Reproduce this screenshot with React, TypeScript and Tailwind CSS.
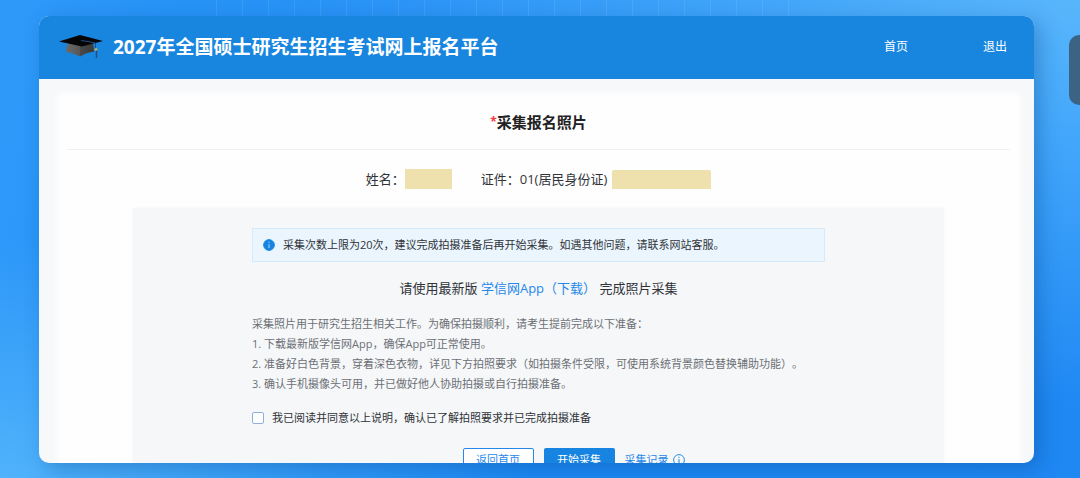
import { useState } from "react";
import type { ReactNode } from "react";

const steps = [
  "1. 下载最新版学信网App，确保App可正常使用。",
  "2. 准备好白色背景，穿着深色衣物，详见下方拍照要求（如拍摄条件受限，可使用系统背景颜色替换辅助功能）。",
  "3. 确认手机摄像头可用，并已做好他人协助拍摄或自行拍摄准备。",
];

function CapLogo() {
  return (
    <svg viewBox="0 0 46 26" className="h-[26px] w-[46px] shrink-0" aria-hidden="true">
      <defs>
        <linearGradient id="cap" x1="0" x2="1">
          <stop offset="0" stopColor="#6b6b6b" />
          <stop offset="0.5" stopColor="#575757" />
          <stop offset="1" stopColor="#3c3c3c" />
        </linearGradient>
      </defs>
      <path d="M9.5 10 L7.5 17.5 Q14 19 22 22.5 Q28 18.5 36 17.5 L35 9 Z" fill="url(#cap)" />
      <path d="M22 12 V22.5 Q28 18.5 36 17.5 L35 9 Z" fill="#333" opacity="0.35" />
      <path d="M1 7.5 L22 1 L45 7 L24 12.5 Z" fill="#050505" />
      <path d="M23 6.5 L30 7.5 L37.5 9 V15" fill="none" stroke="#1d4f86" strokeWidth="1" />
      <circle cx="38" cy="15.5" r="1.5" fill="#b9b35b" />
      <path d="M38.5 16.5 V24" stroke="#1d4f86" strokeWidth="1.5" />
    </svg>
  );
}

function InfoIcon({ filled }: { filled?: boolean }) {
  return (
    <svg viewBox="0 0 12 12" className="size-3 shrink-0" aria-hidden="true">
      <circle
        cx="6"
        cy="6"
        r="5.4"
        fill={filled ? "#1684e0" : "none"}
        stroke="#1684e0"
        strokeWidth="0.9"
      />
      <path
        d="M6 5.2 V9 M6 2.8 V3.9"
        stroke={filled ? "#a9d8fb" : "#1684e0"}
        strokeWidth="1"
      />
    </svg>
  );
}

function Header() {
  return (
    <header className="flex h-[63px] shrink-0 items-center bg-[#1886df] pr-[27px] pb-[2px] pl-[19px] text-white">
      <CapLogo />
      <h1 className="ml-[9px] text-[19px] leading-6 font-bold whitespace-nowrap">
        2027年全国硕士研究生招生考试网上报名平台
      </h1>
      <nav className="ml-auto flex gap-[75px] text-[12px] leading-4 whitespace-nowrap">
        <a href="#home">首页</a>
        <a href="#logout">退出</a>
      </nav>
    </header>
  );
}

function Field({ label, children }: { label: string; children: ReactNode }) {
  return (
    <div className="flex items-center">
      <dt>{label}</dt>
      <dd className="flex items-center">{children}</dd>
    </div>
  );
}

export default function App() {
  const [agreed, setAgreed] = useState(false);

  return (
    <div
      lang="zh-CN"
      className="relative flex h-screen flex-col overflow-hidden bg-[#2491f7] bg-[radial-gradient(ellipse_at_top_right,#58b6fb_0%,#3ea3fa_25%,transparent_60%),radial-gradient(ellipse_at_bottom_left,#50b2fb_0%,transparent_35%),linear-gradient(100deg,#2f9af9_0%,#1c8af5_35%,#1f88f3_100%)] pt-4 pr-[46px] pb-[15px] pl-[39px] font-['Open_Sans','Noto_Sans_CJK_SC',sans-serif] text-[#303338] [text-spacing-trim:space-all]"
    >
      {/* faint grid in the backdrop */}
      <div className="absolute top-0 left-[20%] h-4 w-[54%] bg-[repeating-linear-gradient(90deg,rgba(255,255,255,0.09)_0px,rgba(255,255,255,0.09)_1px,transparent_1px,transparent_26px)]" />

      <div className="relative flex min-h-0 flex-1 flex-col overflow-hidden rounded-[10px] bg-[#f7f8fa] shadow-[6px_6px_20px_rgba(10,70,140,0.35)]">
        <Header />
        <main className="mt-4 mr-4 ml-5 bg-[#fefefe] pb-10 shadow-[0_0_6px_2px_#fefefe]">
          <h2 className="mx-2 flex h-[55px] items-center justify-center border-b border-[#f0f1f3] text-[15px] leading-5 font-bold text-[#222]">
            <span className="text-[12px] text-[#f03b3b]">*</span>采集报名照片
          </h2>

          <dl className="flex h-[58px] items-center justify-center gap-[29px] text-[13px] leading-5">
            <Field label="姓名：">
              <span className="h-5 w-[47px] bg-[#efe1ae]" />
            </Field>
            <Field label="证件：">
              01(居民身份证)
              <span className="ml-[5px] h-[19px] w-[99px] rounded-t-[2px] bg-[#efe1ae]" />
            </Field>
          </dl>

          <section className="mx-[74px] bg-[#f5f7f9] px-[119px] pt-5 pb-10 shadow-[0_0_3px_#f5f7f9]">
            <div className="flex h-[34px] items-center gap-2 border border-[#d6eafa] bg-[#eaf5fe] px-[10px] text-[11px] leading-5">
              <InfoIcon filled />
              <p>采集次数上限为20次，建议完成拍摄准备后再开始采集。如遇其他问题，请联系网站客服。</p>
            </div>

            <p className="mt-4 text-center text-[13px] leading-5">
              请使用最新版{" "}
              <a href="#download" className="text-[#2587ea]">
                学信网App（下载）
              </a>{" "}
              完成照片采集
            </p>

            <div className="mt-4 text-[11px] leading-5 text-[#6d7075]">
              <p>采集照片用于研究生招生相关工作。为确保拍摄顺利，请考生提前完成以下准备：</p>
              {steps.map((step) => (
                <p key={step}>{step}</p>
              ))}
            </div>

            <label className="mt-[14px] flex items-center gap-2 text-[11px] leading-5">
              <input
                type="checkbox"
                checked={agreed}
                onChange={(e) => setAgreed(e.target.checked)}
                className="size-3 appearance-none rounded-[2px] border border-[#8fb0dd] bg-white checked:bg-[#1684e0]"
              />
              我已阅读并同意以上说明，确认已了解拍照要求并已完成拍摄准备
            </label>

            <div className="mt-5 flex items-center justify-center gap-[10px] pl-[70px] text-[11px] leading-4 text-[#2587ea]">
              <button
                type="button"
                className="h-6 w-[71px] rounded-[2px] border border-[#2587ea] bg-white"
              >
                返回首页
              </button>
              <button type="button" className="h-6 w-[71px] rounded-[2px] bg-[#1684e0] text-white">
                开始采集
              </button>
              <a href="#records" className="flex items-center gap-1">
                采集记录
                <InfoIcon />
              </a>
            </div>
          </section>
        </main>
      </div>

      {/* edge handle, sits half outside the window */}
      <div className="absolute top-[35px] -right-3 h-[70px] w-[23px] rounded-[10px] bg-[#3b6484]" />
    </div>
  );
}
